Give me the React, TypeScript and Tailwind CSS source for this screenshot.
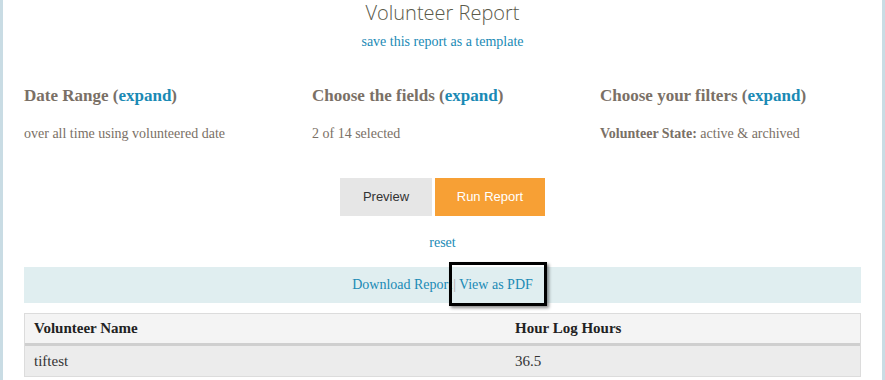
export default function App() {
  const serif = "font-['Liberation_Serif',serif]"
  return (
    <div className={`h-[380px] w-[885px] overflow-hidden border-x-[3px] border-x-[#c9dce4] bg-white ${serif}`}>
      <div className="px-[21px]">
        {/* header */}
        <div className="flex flex-col items-center">
          <h1 className="font-['Open_Sans',sans-serif] text-[20px] font-light leading-[26px] text-[#5a5a4a]">
            Volunteer Report
          </h1>
          <a className="mt-[7px] text-[14px] leading-[18px] text-[#1a8ab5]">save this report as a template</a>
        </div>

        {/* settings */}
        <div className="mt-[34px] grid grid-cols-[288px_288px_1fr]">
          <Section title="Date Range">
            over all time using volunteered date
          </Section>
          <Section title="Choose the fields">2 of 14 selected</Section>
          <Section title="Choose your filters">
            <b>Volunteer State:</b> active &amp; archived
          </Section>
        </div>

        {/* actions */}
        <div className="mt-[35px] flex justify-center gap-[3px] font-['Liberation_Sans',sans-serif] text-[13px]">
          <button className="h-[38px] w-[92px] bg-[#e6e6e6] text-[#333]">Preview</button>
          <button className="h-[38px] w-[110px] bg-[#f7a035] text-white">Run Report</button>
        </div>
        <div className="mt-[18px] text-center text-[14px] leading-[18px] text-[#1a8ab5]">reset</div>

        {/* download band */}
        <div className="mt-[15px] flex h-[36px] items-center justify-center bg-[#e0eef0] text-[14px] leading-[18px] text-[#1a8ab5]">
          <span>Download Report</span>
          <span className="relative ml-[1px] flex items-center">
            <span className="absolute -top-[14px] -bottom-[12px] -left-[4px] -right-[14px] border-[3px] border-black shadow-[2px_2px_3px_rgba(0,0,0,0.45)]" />
            <span className="text-[#aaa]">|</span>
            <span className="ml-[3px]">View as PDF</span>
          </span>
        </div>

        {/* table */}
        <div className="mt-[10px] border border-[#dcdcdc] text-[15px] text-[#222]">
          <div className="grid h-[32px] grid-cols-[490px_1fr] items-center border-b-[3px] border-b-[#cfcfcf] bg-[#f4f4f4] font-bold">
            <div className="pl-[9px]">Volunteer Name</div>
            <div>Hour Log Hours</div>
          </div>
          <div className="grid h-[30px] grid-cols-[490px_1fr] items-center bg-[#ececec] text-[#333]">
            <div className="pl-[9px]">tiftest</div>
            <div>36.5</div>
          </div>
        </div>
      </div>
    </div>
  )
}

function Section({ title, children }: { title: string; children: React.ReactNode }) {
  return (
    <div className="text-[#7a7066]">
      <h3 className="text-[17px] font-bold leading-[22px]">
        {title} (<a className="text-[#1a8ab5]">expand</a>)
      </h3>
      <p className="mt-[18px] text-[14px] leading-[18px]">{children}</p>
    </div>
  )
}
